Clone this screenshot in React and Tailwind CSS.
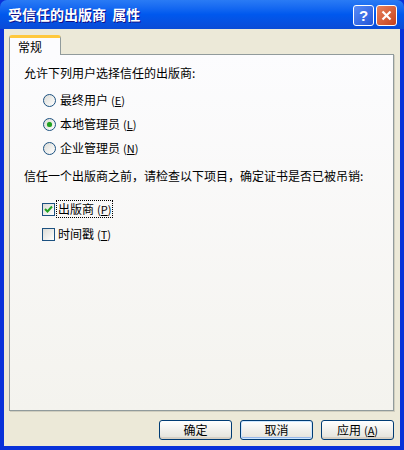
const font = { fontFamily: '"Noto Sans CJK SC", "Noto Sans", sans-serif' }

function Key({ k }) {
  return <span className="ml-[3px] text-[11px]">(<span className="underline">{k}</span>)</span>
}

function Radio({ checked, label, k }) {
  return (
    <div className="flex items-center h-[16px] gap-[3px]">
      <span className="w-[13px] h-[13px] rounded-full border border-[#1C5180] bg-gradient-to-br from-[#DCDCD7] to-white flex items-center justify-center">
        {checked && <span className="w-[5px] h-[5px] rounded-full bg-[#21A121] shadow-[0_0_1px_#7CD07C]" />}
      </span>
      <span className="ml-[1px]">{label}<Key k={k} /></span>
    </div>
  )
}

function Check({ checked, label, k, focus }) {
  return (
    <div className="flex items-center h-[16px] gap-[2px]">
      <span className="w-[13px] h-[13px] border border-[#1C5180] bg-gradient-to-br from-[#DCDCD7] to-white flex items-center justify-center">
        {checked && (
          <svg width="9" height="9" viewBox="0 0 9 9">
            <path d="M1 4 L3.5 6.5 L8 1.5" stroke="#21A121" strokeWidth="2" fill="none" />
          </svg>
        )}
      </span>
      <span className={`px-[1px] ${focus ? 'outline outline-1 outline-dotted outline-black' : ''}`}>{label}<Key k={k} /></span>
    </div>
  )
}

function Btn({ children, def }) {
  return (
    <button className={`h-[20px] w-[73px] rounded-[3px] border border-[#003C74] bg-gradient-to-b from-white to-[#E3E2DA] text-[12px] text-black leading-none ${def ? 'shadow-[inset_0_0_0_1px_#CEE7FF,inset_0_-1px_0_1px_#98B8EA]' : 'shadow-[inset_0_-2px_0_#D6D0C5]'}`}>
      {children}
    </button>
  )
}

export default function App() {
  return (
    <div className="w-[404px] h-[450px] flex flex-col bg-[#0831D9] text-[12px] text-black" style={font}>
      <div className="h-[29px] shrink-0 rounded-t-[7px] bg-gradient-to-b from-[#2A7BF5] via-[#0058EE] to-[#0A4BD6] flex items-center pl-[8px] pr-[7px]">
        <div className="flex-1 text-white font-bold text-[14px] [text-shadow:1px_1px_#0F1089]">受信任的出版商&nbsp;&nbsp;属性</div>
        <div className="flex mt-[1px]">
          <div className="w-[21px] h-[21px] rounded-[3px] border border-white bg-gradient-to-br from-[#5A8BF6] to-[#2255D8] flex items-center justify-center text-white font-bold text-[15px] leading-none" style={{ fontFamily: '"Liberation Sans", sans-serif' }}>?</div>
          <div className="ml-[2px] w-[21px] h-[21px] rounded-[3px] border border-white bg-gradient-to-br from-[#E8825C] to-[#C6401A] flex items-center justify-center">
            <svg width="11" height="11" viewBox="0 0 11 11">
              <path d="M1.5 1.5 L9.5 9.5 M9.5 1.5 L1.5 9.5" stroke="white" strokeWidth="2.2" />
            </svg>
          </div>
        </div>
      </div>
      <div className="flex-1 mx-[4px] mb-[4px] bg-[#ECE9D8] flex flex-col pl-[5px] pr-[6px]">
        <div className="flex pt-[6px]">
          <div className="h-[20px] w-[52px] relative z-10 -mb-[1px] bg-[#FCFCFE] border-x border-[#919B9C] rounded-t-[3px] border-t-[3px] border-t-[#FFC83C] pl-[8px] pt-[1px] leading-[15px]">常规</div>
        </div>
        <div className="h-[357px] border border-[#919B9C] shadow-[1px_1px_0_#D0CEBF] bg-gradient-to-b from-[#FCFCFE] to-[#F4F3EE] flex flex-col pl-[14px] pt-[10px] leading-[16px]">
          <div>允许下列用户选择信任的出版商:</div>
          <div className="ml-[19px] mt-[11px] flex flex-col gap-[8px]">
            <Radio label="最终用户" k="E" />
            <Radio checked label="本地管理员" k="L" />
            <Radio label="企业管理员" k="N" />
          </div>
          <div className="mt-[12px]">信任一个出版商之前，请检查以下项目，确定证书是否已被吊销:</div>
          <div className="ml-[18px] mt-[17px] flex flex-col gap-[9px]">
            <Check checked focus label="出版商" k="P" />
            <Check label="时间戳" k="T" />
          </div>
        </div>
        <div className="flex justify-end mt-[9px] gap-[8px]">
          <Btn>确定</Btn>
          <Btn def>取消</Btn>
          <Btn>应用<Key k="A" /></Btn>
        </div>
      </div>
    </div>
  )
}
